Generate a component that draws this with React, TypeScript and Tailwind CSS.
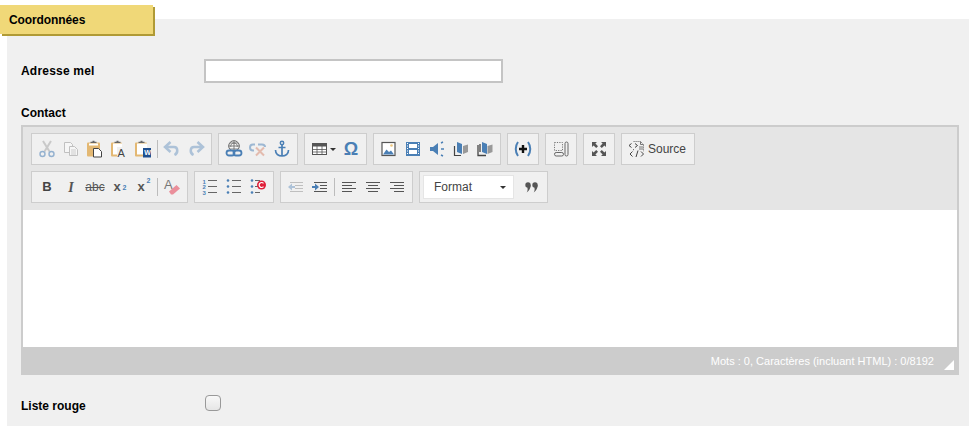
import React from "react";

const B = "#4a7fb5";
const G = "#555";
type P = { children: React.ReactNode };
const Svg = ({ children }: P) => (
  <svg width="18" height="18" viewBox="0 0 18 18" fill="none" className="overflow-visible">{children}</svg>
);

const Cut = () => <Svg><g opacity=".55"><path d="M5 1l6.500 10.500M13 1L6.500 11.500" stroke="#aaa" strokeWidth="2"/><circle cx="4.500" cy="14" r="2.500" stroke={B} strokeWidth="1.400"/><circle cx="13.500" cy="14" r="2.500" stroke={B} strokeWidth="1.400"/></g></Svg>;
const Copy = () => <Svg><g opacity=".45" stroke="#888" fill="#fff"><path d="M2.500 2.500h6l2 2v8h-8z"/><path d="M7.500 6.500h5l3 3v6h-8z"/><path d="M9 10h5M9 12h5M9 14h5" strokeWidth=".8"/></g></Svg>;
const Clip = () => <path d="M4.500 3V1.800h2V.8h2v1h2V3z" fill="#666"/>;
const Paste = () => <Svg><rect x="1" y="2.500" width="13" height="14" rx="1" fill="#e3b873"/><rect x="3" y="3.500" width="9" height="2" fill="#fff"/><Clip /><path d="M7.500 8.500h5l3 3v5.500h-8z" fill="#fff" stroke="#444"/></Svg>;
const PasteText = () => <Svg><rect x="1" y="2.500" width="11" height="14" rx="1" fill="#e3b873"/><rect x="3" y="3.500" width="9" height="11" fill="#fff"/><Clip /><rect x="7" y="7" width="10" height="11" fill="#f0f0f0"/><text x="7.500" y="16.500" fontSize="11" fontFamily="Liberation Sans, sans-serif" fill="#444">A</text></Svg>;
const PasteWord = () => <Svg><rect x="1" y="2.500" width="12" height="14" rx="1" fill="#e3b873"/><rect x="3" y="3.500" width="10" height="11" fill="#fff"/><Clip /><rect x="9" y="8" width="8" height="9.500" fill="#20508f"/><text x="10.200" y="15" fontSize="7" fontWeight="700" fontFamily="Liberation Sans, sans-serif" fill="#fff">W</text></Svg>;
const Undo = () => <Svg><g opacity=".4"><path d="M3 7h8c4 0 4.500 6 .5 8" stroke={B} strokeWidth="2.500"/><path d="M7.500 2L2 7l5.500 5" stroke={B} strokeWidth="2.500"/></g></Svg>;
const Redo = () => <Svg><g opacity=".4"><path d="M15 7H7c-4 0-4.500 6-.5 8" stroke={B} strokeWidth="2.500"/><path d="M10.500 2L16 7l-5.500 5" stroke={B} strokeWidth="2.500"/></g></Svg>;
const Link = () => <Svg><circle cx="9" cy="6" r="5.300" stroke="#666" fill="#f6f6f6"/><path d="M3.700 6h10.600M9 .7v10.600M5 3h8M5 9h8" stroke="#666" strokeWidth=".8"/><path d="M6 7c-1-2 1-4 3-4s4 2 3 4" stroke="#666" strokeWidth=".8"/><rect x="1.500" y="10.500" width="8" height="5" rx="2.500" stroke={B} strokeWidth="1.800" fill="#f0f0f0"/><rect x="8.500" y="10.500" width="8" height="5" rx="2.500" stroke={B} strokeWidth="1.800"/></Svg>;
const Unlink = () => <Svg><g opacity=".5"><path d="M6 4.500H4c-4 0-4 6 0 6h1" stroke={B} strokeWidth="2"/><path d="M9 4.500h4c2 0 3 1 3 2.500" stroke={B} strokeWidth="2"/><path d="M7 7.500l8 8M15 7.500l-8 8" stroke="#d8876e" strokeWidth="2"/></g></Svg>;
const Anchor = () => <Svg><circle cx="9" cy="3" r="1.700" stroke={B} strokeWidth="1.500"/><path d="M9 5v11M5.500 7.500h7M2.500 10c0 4 3 6 6.500 6s6.500-2 6.500-6" stroke={B} strokeWidth="1.700"/></Svg>;
const Table = () => <svg width="16" height="14" viewBox="0 0 16 14" fill="none"><rect x=".5" y="1.500" width="14" height="11" fill="#fff" stroke={G}/><path d="M.5 2h14v2.500H.5z" fill={G}/><path d="M5 4v8M10 4v8M1 7.500h13M1 10h13" stroke={G} strokeWidth=".8"/></svg>;
const Arrow = () => <svg width="6" height="3" viewBox="0 0 6 3"><path d="M0 0h6L3 3z" fill="#333"/></svg>;
const Image = () => <Svg><rect x="2" y="2.500" width="13" height="13" fill="#fff" stroke={G} strokeWidth="1.200"/><path d="M3 14.500l3.500-5 2.500 2.500 2-1.500 3 4z" fill={B}/><circle cx="11.500" cy="5.500" r="1.300" fill="#edc67d"/></Svg>;
const Film = () => <Svg><rect x="2" y="2" width="14" height="14" fill={B}/><rect x="5" y="4" width="8" height="4" fill="#fff"/><rect x="5" y="10" width="8" height="4" fill="#fff"/><path d="M3 3.500h1M3 6h1M3 8.500h1M3 11h1M3 13.500h1M14 3.500h1M14 6h1M14 8.500h1M14 11h1M14 13.500h1" stroke="#fff"/></Svg>;
const Sound = () => <Svg><path d="M2 7h3l5-4v12l-5-4H2z" fill={B}/><path d="M13 3l2-1M13 9h3M13 15l2 1" stroke={B} strokeWidth="1.500"/></Svg>;
const BookL = () => <Svg><path d="M5 2l5 2v10l-5-2z" fill={B}/><path d="M11 6l5-1.500V12l-5 2z" fill="#999"/><path d="M2.500 6v9.500H9" stroke="#444" strokeWidth="1.200"/></Svg>;
const BookR = () => <Svg><path d="M6 2l5 2v10l-5-2z" fill={B}/><path d="M11.500 6l5-1.500V12l-5 2z" fill="#999"/><path d="M2 5v10.500h8M4 4v8" stroke="#444" strokeWidth="1.300"/></Svg>;
const PlusBr = () => <Svg><path d="M4 2C1 6 1 12 4 16" stroke={B} strokeWidth="2"/><path d="M14 2c3 4 3 10 0 14" stroke={B} strokeWidth="2"/><path d="M9 5v8M5 9h8" stroke="#111" strokeWidth="2.400"/></Svg>;
const Blocks = () => <Svg><path d="M2.500 2.500h8v8h-8z" stroke="#777" strokeDasharray="1.200 1.200"/><rect x="2.500" y="12.500" width="9" height="3.500" rx="1.700" stroke="#666"/><rect x="13" y="2" width="3" height="14" rx="1.500" stroke="#666"/></Svg>;
const Max = () => <Svg><g fill="#555"><path d="M2 2h5L5.400 3.600 8 6.200 6.200 8 3.600 5.400 2 7z"/><path d="M16 2h-5l1.600 1.600L10 6.200 11.800 8l2.600-2.600L16 7z"/><path d="M2 16h5l-1.600-1.600L8 11.800 6.200 10l-2.600 2.600L2 11z"/><path d="M16 16h-5l1.600-1.600-2.600-2.600 1.800-1.800 2.600 2.600L16 11z"/></g></Svg>;
const SourceI = () => <Svg><path d="M5.500 1.500h7l3 3v7M5.500 9v2" stroke="#777" strokeDasharray="1.200 .8"/><path d="M12.500 1.500v3h3M11 7h4M11 9h4" stroke="#777"/><path d="M3.500 3.500L1 5.500l2.500 2M7 3.500l2.500 2-2.500 2M4.500 11.500L2 14l2.500 2.500M13 11.500l2.500 2.500-2.500 2.500M10 10.500L8 17" stroke="#444"/></Svg>;
const Bold = () => <span className="text-[13px] font-bold text-[#444] font-['Liberation_Sans',sans-serif]">B</span>;
const Ital = () => <span className="text-[14px] italic font-['Liberation_Serif',serif] font-bold text-[#555]">I</span>;
const Strike = () => <span className="text-[12px] text-[#555] line-through font-['Liberation_Sans',sans-serif]">abc</span>;
const Sub = () => <span className="relative text-[13px] font-bold text-[#555] font-['Liberation_Sans',sans-serif]">x<span className="absolute left-[9px] top-[6px] text-[7px] font-bold text-[#4a7fb5]">2</span><span className="inline-block w-1" /></span>;
const Sup = () => <span className="relative text-[13px] font-bold text-[#555] font-['Liberation_Sans',sans-serif]">x<span className="absolute left-[9px] -top-[1px] text-[7px] font-bold text-[#4a7fb5]">2</span><span className="inline-block w-1" /></span>;
const Eraser = () => <Svg><text x="1" y="11" fontSize="13" fontFamily="Liberation Sans, sans-serif" fill="#777">A</text><path d="M6 13.500l7.500-6.500 3.500 3.500-7 6H8z" fill="#ea8f9b"/></Svg>;
const lines = (x1: number, x2: number, ys: number[], c: string) => ys.map((y) => <path key={y} d={`M${x1} ${y}H${x2}`} stroke={c} strokeWidth="1" />);
const Num = () => <Svg>{lines(7, 16, [2.500, 8.500, 14.500], "#666")}<text x="1.500" y="5.500" fontSize="6" fontWeight="700" fontFamily="Liberation Sans, sans-serif" fill={B}>1</text><text x="1.500" y="11" fontSize="6" fontWeight="700" fontFamily="Liberation Sans, sans-serif" fill={B}>2</text><text x="1.500" y="17" fontSize="6" fontWeight="700" fontFamily="Liberation Sans, sans-serif" fill={B}>3</text></Svg>;
const Bul = () => <Svg>{lines(7, 16, [2.500, 8.500, 14.500], "#666")}<circle cx="3" cy="2.500" r="1.300" fill={B}/><circle cx="3" cy="8.500" r="1.300" fill={B}/><circle cx="3" cy="14.500" r="1.300" fill={B}/></Svg>;
const Lang = () => <Svg>{lines(6, 11, [2.500, 8.500, 14.500], "#666")}<circle cx="3" cy="2.500" r="1.300" fill={B}/><circle cx="3" cy="8.500" r="1.300" fill={B}/><circle cx="3" cy="14.500" r="1.300" fill={B}/><circle cx="12.500" cy="7" r="4.500" fill="#e0203a"/><path d="M14.500 5.300a2.500 2.500 0 1 0 0 3.400" stroke="#fff" strokeWidth="1.200"/></Svg>;
const OutD = () => <Svg><g opacity=".4">{lines(8, 16, [7.500, 10.500], "#777")}<path d="M3 4.500h13M3 13.500h13" stroke="#777"/><path d="M1 9l4-3.500V8h3v2H5v2.500z" fill={B}/></g></Svg>;
const InD = () => <Svg>{lines(9, 16, [7.500, 10.500], "#555")}<path d="M3 4.500h13M3 13.500h13" stroke="#555"/><path d="M8 9L4 5.500V8H1v2h3v2.500z" fill={B}/></Svg>;
const Align = ({ k }: { k: "l" | "c" | "r" }) => {
  const ws = [14, 10, 14, 10];
  const ys = [4.500, 7.500, 10.500, 13.500];
  return <Svg>{ws.map((w, i) => {
    const x = k === "l" ? 2 : k === "c" ? 9 - w / 2 : 16 - w;
    return <path key={i} d={`M${x} ${ys[i]}h${w}`} stroke="#555" strokeWidth="1"/>;
  })}</Svg>;
};
const Quote = () => <svg width="14" height="11" viewBox="0 0 14 11"><g fill="#555"><circle cx="3" cy="3" r="2.700"/><path d="M5.700 3c0 3-1.500 6-4 7.500 1-1.800 1.200-3.500.6-5z"/><circle cx="10" cy="3" r="2.700"/><path d="M12.700 3c0 3-1.500 6-4 7.500 1-1.800 1.200-3.500.6-5z"/></g></svg>;

const Btn = ({ children, w = "w-6" }: { children: React.ReactNode; w?: string }) => (
  <span className={`${w} h-6 flex items-center justify-center gap-[2px] shrink-0`}>{children}</span>
);
const Sep = () => <span className="w-[5px] h-[18px] flex justify-center shrink-0"><span className="w-px h-full bg-[#bcbcbc]" /></span>;
const Group = ({ children }: P) => (
  <div className="flex items-center p-[3px] border border-[#cdcdcd] bg-[#f0f0f0] h-8">{children}</div>
);

export default function App() {
  return (
    <div className="w-[977px] h-[426px] overflow-hidden bg-white pt-[5px] font-['Liberation_Sans',Arial,sans-serif]">
      <div className="relative z-10 w-[155px] h-[31px] flex">
        <div className="w-[153px] h-[29px] bg-[#f0d878] pl-[9px] pt-[7px] text-xs font-bold tracking-[-0.1px] text-black shadow-[2px_2px_0_#b09a35]">Coordonnées</div>
      </div>
      <div className="ml-[7px] -mt-[17px] w-[962px] h-[410px] bg-[#f0f0f0] px-[14px] pt-[40px]">
        <div className="flex items-center h-6">
          <label className="w-[183px] text-xs font-bold tracking-[0.2px] text-black">Adresse mel</label>
          <input className="w-[299px] h-6 bg-white border-2 border-[#c4c4c4]" />
        </div>
        <div className="mt-[22px] h-[20px] text-xs font-bold text-black">Contact</div>
        <div className="w-[938px] h-[250px] border-2 border-b-0 border-[#cccccc] flex flex-col">
          <div className="h-[83px] bg-[#e5e5e5] pt-[6px] pl-2 flex flex-col gap-[6px]">
            <div className="flex gap-[6px]">
              <Group><Btn><Cut /></Btn><Btn><Copy /></Btn><Btn><Paste /></Btn><Btn><PasteText /></Btn><Btn><PasteWord /></Btn><Sep /><Btn><Undo /></Btn><Btn><Redo /></Btn></Group>
              <Group><Btn><Link /></Btn><Btn><Unlink /></Btn><Btn><Anchor /></Btn></Group>
              <Group><Btn w="w-[31px]"><Table /><Arrow /></Btn><Btn><span className="text-[18px] leading-none font-bold text-[#4a7fb5] font-['Liberation_Sans',sans-serif]">Ω</span></Btn></Group>
              <Group><Btn><Image /></Btn><Btn><Film /></Btn><Btn><Sound /></Btn><Btn><BookL /></Btn><Btn><BookR /></Btn></Group>
              <Group><Btn><PlusBr /></Btn></Group>
              <Group><Btn><Blocks /></Btn></Group>
              <Group><Btn><Max /></Btn></Group>
              <Group><Btn w="w-[66px]"><span className="-ml-[2px] flex"><SourceI /></span><span className="text-xs text-[#444]">Source</span></Btn></Group>
            </div>
            <div className="flex gap-[6px]">
              <Group><Btn><Bold /></Btn><Btn><Ital /></Btn><Btn><Strike /></Btn><Btn><Sub /></Btn><Btn><Sup /></Btn><Sep /><Btn><Eraser /></Btn></Group>
              <Group><Btn><Num /></Btn><Btn><Bul /></Btn><Btn><Lang /></Btn></Group>
              <Group><Btn><OutD /></Btn><Btn><InD /></Btn><Sep /><Btn><Align k="l" /></Btn><Btn><Align k="c" /></Btn><Btn><Align k="r" /></Btn></Group>
              <Group>
                <div className="w-[91px] h-6 bg-white border border-[#e5e5e5] flex items-center justify-between pl-[10px] pr-[7px] mr-[6px]">
                  <span className="text-xs text-[#444]">Format</span><Arrow />
                </div>
                <Btn><Quote /></Btn>
              </Group>
            </div>
          </div>
          <div className="h-[137px] bg-white" />
          <div className="h-7 -mx-[2px] bg-[#cccccc] flex items-center justify-end relative pr-[25px] text-[11px] text-white">
            <span>Mots : 0, Caractères (incluant HTML) : 0/8192</span>
            <svg className="absolute right-[5px] bottom-[5px]" width="10" height="10" viewBox="0 0 10 10"><path d="M10 0v10H0z" fill="#fff"/></svg>
          </div>
        </div>
        <div className="flex items-center mt-[20px] h-[16px]">
          <label className="w-[184px] text-xs font-bold text-black pt-[5px]">Liste rouge</label>
          <input type="checkbox" className="appearance-none w-4 h-4 rounded-[4px] border border-[#999] bg-gradient-to-b from-[#f8f8f8] to-[#e6e6e6]" />
        </div>
      </div>
    </div>
  );
}
